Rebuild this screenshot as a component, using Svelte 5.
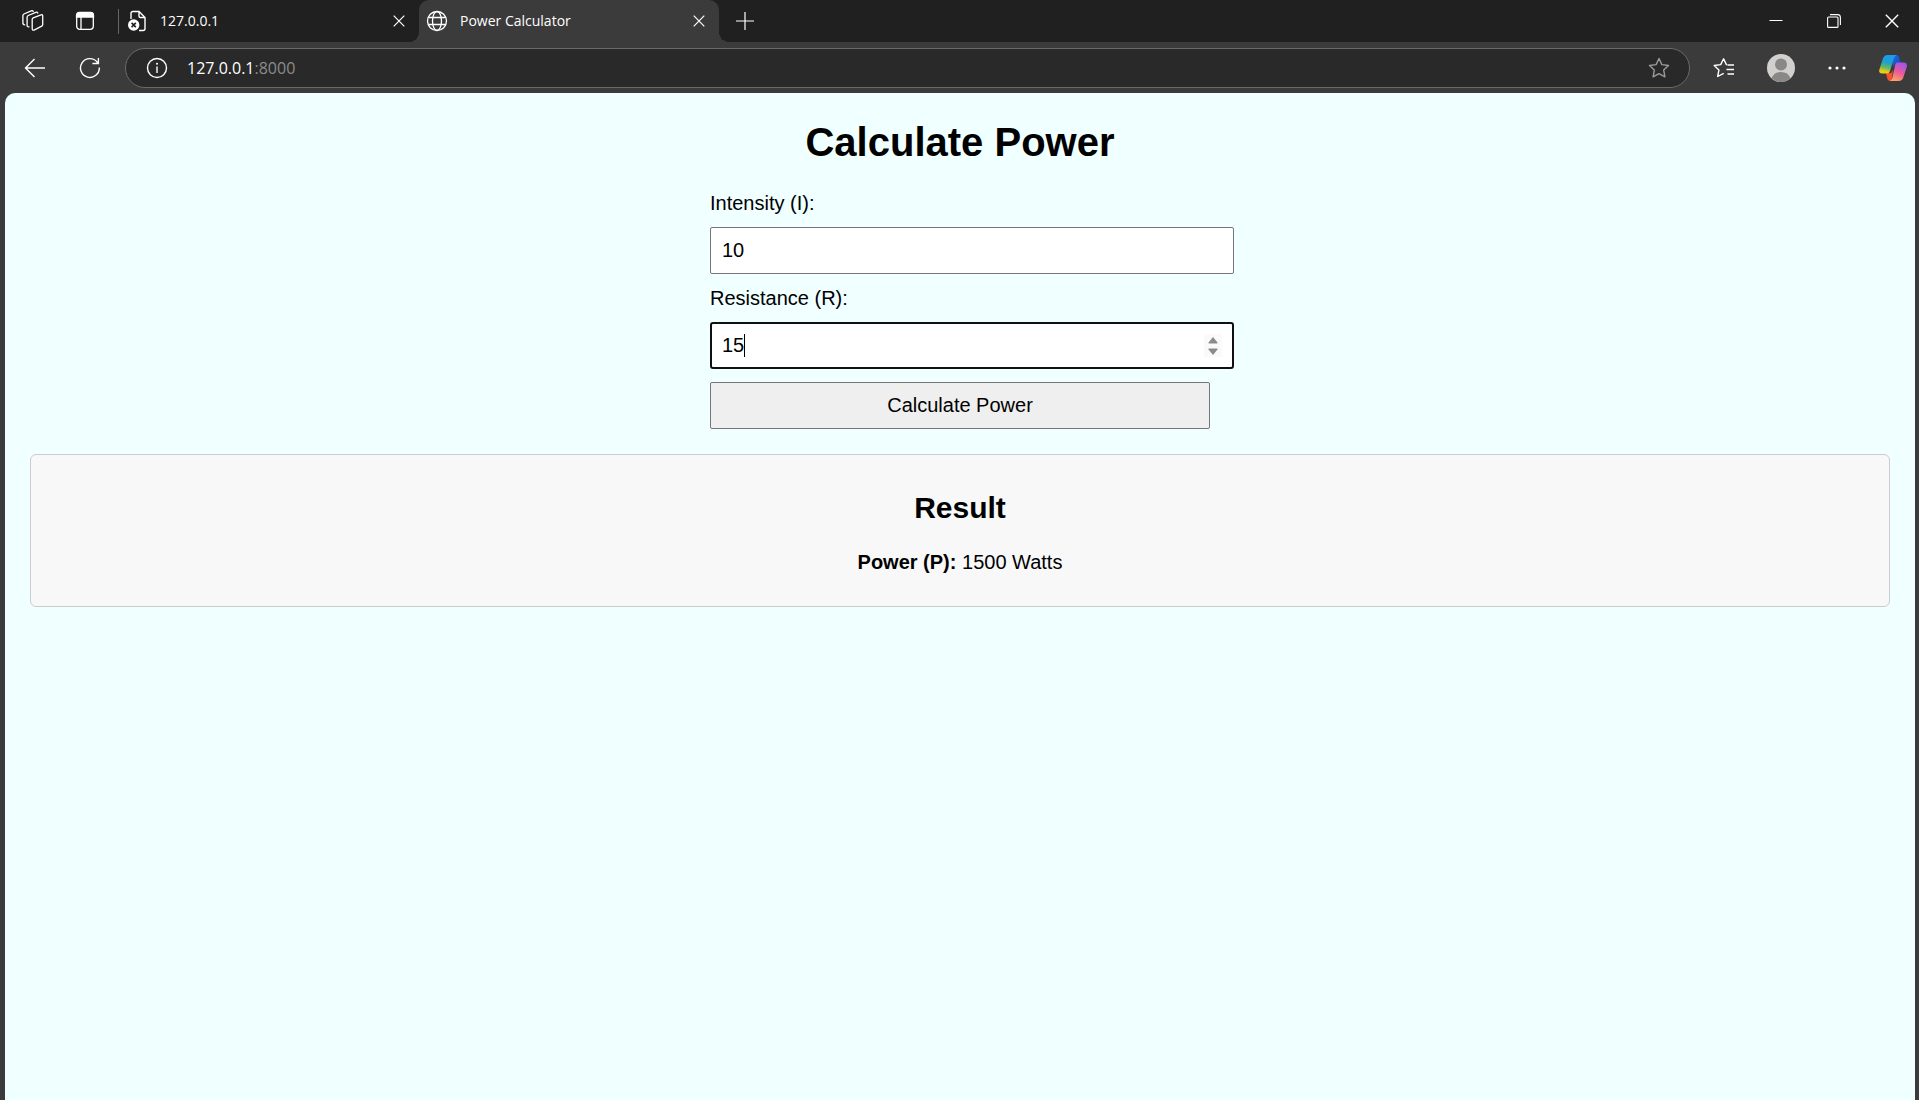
<script>
  let intensity = $state(10);
  let resistance = $state(15);
  let power = $state(1500);

  function calculate(event) {
    event.preventDefault();
    power = intensity * intensity * resistance;
  }
</script>

{#snippet cross(size)}
  <svg width={size} height={size} viewBox="0 0 12 12" fill="none" stroke="currentColor" stroke-width="1.2">
    <path d="M.7.7l10.6 10.6M11.3.7L.7 11.3" />
  </svg>
{/snippet}

<div class="browser">
  <header class="tabs">
    <button class="icon workspaces" aria-label="Workspaces">
      <svg width="22" height="22" viewBox="0 0 22 22" fill="none" stroke="currentColor" stroke-width="1.3" stroke-linejoin="round" stroke-linecap="round">
        <path d="M10.2 9.2q.1-1 1-1.400l7.800-3q1.600-.4 1.700 1.100v8.800q-.1 1-1 1.500l-7.600 3.900q-1.600.5-1.900-1.100z" />
        <path d="M7 16.800q-1.800.2-1.900-1.300V7.200q.1-1.200 1.100-1.700l7.600-3.200q1.500-.4 2 .8" />
        <path d="M2.700 14.800q-1.700 0-1.800-1.400V5.600q0-1.100 1-1.600l7.300-3.100q1.300-.4 2 .3" />
      </svg>
    </button>
    <button class="icon" aria-label="Tab actions">
      <svg width="20" height="20" viewBox="0 0 20 20" fill="none" stroke="currentColor" stroke-width="1.3">
        <rect x="1.700" y="1.700" width="16.600" height="16.600" rx="3" />
        <path d="M1.500 6V4.500q0-3 3-3h11q3 0 3 3V6z" fill="currentColor" />
        <path d="M6 6v12" />
      </svg>
    </button>
    <span class="divider"></span>
    <div class="tab first">
      <svg width="20" height="22" viewBox="0 0 20 22" fill="none" stroke="currentColor" stroke-width="1.4">
        <path d="M4 9V3.500Q4 1.500 6 1.500h6l6 6v11q0 2-2 2h-4M12 1.500V6q0 1.500 1.500 1.500H18" />
        <circle cx="6.700" cy="15" r="5.700" fill="currentColor" stroke="none" />
        <path d="M4.600 12.900l4.200 4.200m0-4.200l-4.200 4.200" stroke="#202020" stroke-width="1.600" />
      </svg>
      <span class="title">127.0.0.1</span>
      <button class="close" aria-label="Close tab">{@render cross(12)}</button>
    </div>
    <div class="tab active">
      <svg width="22" height="22" viewBox="0 0 22 22" fill="none" stroke="currentColor" stroke-width="1.3">
        <circle cx="11" cy="11" r="9.500" />
        <ellipse cx="11" cy="11" rx="4.500" ry="9.500" />
        <path d="M2.500 7.500h17M2.500 14.500h17" />
      </svg>
      <span class="title">Power Calculator</span>
      <button class="close" aria-label="Close tab">{@render cross(12)}</button>
    </div>
    <button class="icon new" aria-label="New tab">
      <svg width="18" height="18" viewBox="0 0 18 18" stroke="currentColor" stroke-width="1.2"><path d="M9 0v18M0 9h18" /></svg>
    </button>
    <div class="window">
      <button class="icon" aria-label="Minimize">
        <svg width="14" height="14" viewBox="0 0 14 14" stroke="currentColor"><path d="M.5 6.500h13" /></svg>
      </button>
      <button class="icon" aria-label="Restore">
        <svg width="14" height="14" viewBox="0 0 14 14" fill="none" stroke="currentColor" stroke-width="1.1">
          <rect x=".6" y="3" width="10.400" height="10.400" rx="1" />
          <path d="M3 .6h7.500q2.900 0 2.900 2.900V11" />
        </svg>
      </button>
      <button class="icon" aria-label="Close">{@render cross(14)}</button>
    </div>
  </header>

  <nav class="toolbar">
    <button class="icon" aria-label="Back">
      <svg width="22" height="20" viewBox="0 0 22 20" fill="none" stroke="currentColor" stroke-width="1.400"><path d="M21 10H1.500M10.500 1l-9 9 9 9" /></svg>
    </button>
    <button class="icon" aria-label="Refresh">
      <svg width="22" height="22" viewBox="0 0 22 22" fill="none" stroke="currentColor" stroke-width="1.400">
        <path d="M20.300 10.500a9.400 9.400 0 1 1-2-5.300l1 1.300M19.400 1v5.500h-6" />
      </svg>
    </button>
    <div class="address">
      <button class="icon" aria-label="Site information">
        <svg width="22" height="22" viewBox="0 0 22 22" fill="none" stroke="currentColor" stroke-width="1.400">
          <circle cx="11" cy="11" r="9.500" /><path d="M11 9.500V16" />
          <circle cx="11" cy="6.800" r="1" fill="currentColor" stroke="none" />
        </svg>
      </button>
      <span class="url">127.0.0.1<span class="port">:8000</span></span>
      <button class="icon star" aria-label="Add to favorites">
        <svg width="22" height="22" viewBox="0 0 22 22" fill="none" stroke="currentColor" stroke-width="1.400" stroke-linejoin="round">
          <path d="M11 1.500l2.900 6.100 6.600.9-4.800 4.600 1.200 6.700-5.900-3.200-5.900 3.200 1.200-6.700L1.500 8.500l6.600-.9z" />
        </svg>
      </button>
    </div>
    <div class="actions">
      <button class="icon" aria-label="Favorites">
        <svg width="22" height="22" viewBox="0 0 22 22" fill="none" stroke="currentColor" stroke-width="1.400" stroke-linejoin="round">
          <path d="M14.500 8H21M13.500 12.500H21M14.500 17H21" />
          <path d="M14.200 7.600h-.8L10.600 1.800 7.700 7.600l-6.500.9 4.700 4.500-1.200 6.500 6-3.100" />
        </svg>
      </button>
      <button class="icon" aria-label="Profile">
        <svg width="28" height="28" viewBox="0 0 28 28">
          <circle cx="14" cy="14" r="14" fill="#d2d0ce" />
          <circle cx="14" cy="10.500" r="6" fill="#8a8886" />
          <path d="M4.500 24.300Q7 18 14 18t9.500 6.300Q19.500 28 14 28t-9.500-3.700z" fill="#8a8886" />
        </svg>
      </button>
      <button class="icon" aria-label="Settings and more">
        <svg width="18" height="4" viewBox="0 0 18 4" fill="currentColor"><circle cx="2" cy="2" r="1.600" /><circle cx="9" cy="2" r="1.600" /><circle cx="16" cy="2" r="1.600" /></svg>
      </button>
      <button class="icon copilot" aria-label="Copilot">
        <svg width="28" height="28" viewBox="0 0 28 28">
          <defs>
            <linearGradient id="cool" x1=".55" y1="0" x2=".35" y2="1">
              <stop offset="0" stop-color="#1a9cf0" /><stop offset=".4" stop-color="#1f9fd0" />
              <stop offset=".68" stop-color="#62b862" /><stop offset=".92" stop-color="#f2cc11" />
            </linearGradient>
            <linearGradient id="warm" x1=".7" y1="0" x2=".3" y2="1">
              <stop offset="0" stop-color="#a054ee" /><stop offset=".5" stop-color="#e85a9c" /><stop offset="1" stop-color="#ffa45c" />
            </linearGradient>
            <linearGradient id="blue" x1="0" y1="0" x2="1" y2="1">
              <stop offset="0" stop-color="#1b6fe0" /><stop offset="1" stop-color="#1742b8" />
            </linearGradient>
          </defs>
          <path d="M13 1h4q2.500 0 3.300 2.500L21.700 9H18q-2 0-2.700 2L14 13z" fill="url(#blue)" />
          <path d="M7 19h5l2-3-1.500 11h-2Q9 27 8.200 24.300z" fill="#f5522d" />
          <path d="M8.500 1h9.500q-2.200.3-3 3l-4 13q-.8 2.500-3.300 2.500H3Q-.6 19.500.4 15.500L3.800 4.800Q5.200 1 8.500 1z" fill="url(#cool)" />
          <path d="M18.500 8.500h6q4 0 3.300 4.200l-3.400 10.500Q23.200 27 19.800 27h-9.300q2.200-.3 2.800-3l3-13.500q.5-2 2.200-2z" fill="url(#warm)" />
        </svg>
      </button>
    </div>
  </nav>

  <main>
    <h1>Calculate Power</h1>
    <form onsubmit={calculate}>
      <label for="intensity">Intensity (I):</label>
      <input id="intensity" type="number" bind:value={intensity} />
      <label for="resistance">Resistance (R):</label>
      <div class="field">
        <input id="resistance" class="current" type="number" bind:value={resistance} />
        <span class="caret"></span>
        <span class="stepper">
          <button type="button" aria-label="Increase" onclick={() => resistance++}>
            <svg width="10" height="7" viewBox="0 0 10 7"><path d="M5 0l4.500 5.500q.3 1-.7 1H1.200q-1 0-.7-1z" fill="#8b8b8b" /></svg>
          </button>
          <button type="button" aria-label="Decrease" onclick={() => resistance--}>
            <svg width="10" height="7" viewBox="0 0 10 7"><path d="M5 7L.5 1.500q-.3-1 .7-1h7.600q1 0 .7 1z" fill="#8b8b8b" /></svg>
          </button>
        </span>
      </div>
      <button class="submit" type="submit">Calculate Power</button>
    </form>
    <section class="result">
      <h2>Result</h2>
      <p><strong>Power (P):</strong> {power} Watts</p>
    </section>
  </main>
</div>

<style>
  :global(body) {
    margin: 0;
    background: #3b3b3b;
  }
  .browser {
    min-height: 100vh;
    display: flex;
    flex-direction: column;
    background: #3b3b3b;
    color: #fff;
    font-family: "Segoe UI", "Open Sans", sans-serif;
  }
  svg {
    display: block;
    flex: none;
  }
  button {
    font: inherit;
    color: inherit;
    padding: 0;
    border: 0;
    background: none;
  }
  .icon {
    width: 30px;
    height: 30px;
    flex: none;
    display: flex;
    align-items: center;
    justify-content: center;
  }
  .copilot {
    width: 28px;
  }
  .tabs {
    height: 42px;
    display: flex;
    align-items: center;
    background: #202020;
    font-size: 14px;
  }
  .workspaces {
    margin: 0 22px 0 18px;
  }
  .divider {
    width: 1px;
    height: 25px;
    margin-left: 18px;
    background: #666;
  }
  .tab {
    width: 300px;
    height: 42px;
    box-sizing: border-box;
    display: flex;
    align-items: center;
    padding: 0 14px 0 7px;
    gap: 12px;
  }
  .first {
    padding-left: 8px;
    gap: 13px;
  }
  .title {
    flex: 1;
    line-height: 20px;
  }
  .active {
    position: relative;
    background: #3b3b3b;
    border-radius: 10px 10px 0 0;
  }
  .active::before,
  .active::after {
    content: "";
    position: absolute;
    bottom: 0;
    width: 10px;
    height: 10px;
  }
  .active::before {
    right: 100%;
    background: radial-gradient(circle at 0 0, #202020 10px, #3b3b3b 10px);
  }
  .active::after {
    left: 100%;
    background: radial-gradient(circle at 100% 0, #202020 10px, #3b3b3b 10px);
  }
  .new {
    margin-left: 11px;
  }
  .window {
    margin-left: auto;
    padding-right: 12px;
    display: flex;
    gap: 28px;
  }
  .toolbar {
    height: 51px;
    box-sizing: border-box;
    display: flex;
    align-items: center;
    padding: 0 12px 0 20px;
  }
  .toolbar > .icon + .icon {
    margin-left: 25px;
  }
  .address {
    flex: 1;
    height: 40px;
    box-sizing: border-box;
    display: flex;
    align-items: center;
    margin: 0 19px 0 20px;
    padding: 0 15px 0 16px;
    border: 1px solid #6a6a6a;
    border-radius: 20px;
    background: #292929;
    font-size: 16px;
  }
  .url {
    flex: 1;
    margin-left: 15px;
    line-height: 24px;
  }
  .port {
    color: #8c8c8c;
  }
  .star {
    color: #9a9a9a;
  }
  .actions {
    flex: none;
    width: 198px;
    display: flex;
    align-items: center;
    justify-content: space-between;
  }
  main {
    flex: 1;
    margin: 0 4px 0 5px;
    padding: 26px 25px 25px;
    border-radius: 10px 10px 0 0;
    background: #f0ffff;
    color: #000;
    font: 20px/23px Arial, "Liberation Sans", sans-serif;
  }
  h1 {
    margin: 0 0 27px;
    font-size: 40px;
    line-height: 46px;
    text-align: center;
  }
  form {
    width: 500px;
    margin: 0 auto;
  }
  label {
    display: block;
    margin-bottom: 12px;
  }
  input {
    display: block;
    box-sizing: content-box;
    width: 100%;
    height: 23px;
    margin: 0 0 13px;
    padding: 11px;
    border: 1px solid #767676;
    border-radius: 2px;
    background: #fff;
    color: #000;
    font: inherit;
    appearance: textfield;
  }
  input::-webkit-inner-spin-button {
    appearance: none;
    margin: 0;
  }
  .current {
    padding: 10px;
    border: 2px solid #101010;
    border-radius: 3px;
    outline: none;
    caret-color: transparent;
  }
  .field {
    position: relative;
  }
  .caret {
    position: absolute;
    left: 34px;
    top: 12px;
    width: 1px;
    height: 23px;
    background: #000;
  }
  .stepper {
    position: absolute;
    left: calc(100% - 6px);
    top: 12px;
    width: 18px;
    height: 23px;
    display: flex;
    flex-direction: column;
    align-items: center;
    justify-content: center;
    gap: 4px;
    background: #fafafa;
  }
  .submit {
    display: block;
    width: 100%;
    height: 47px;
    border: 1px solid #767676;
    border-radius: 2px;
    background: #efefef;
  }
  .result {
    margin-top: 25px;
    padding: 36px 25px 32px;
    border: 1px solid #ccc;
    border-radius: 6px;
    background: #f8f8f8;
    text-align: center;
  }
  h2 {
    margin: 0 0 26px;
    font-size: 30px;
    line-height: 34px;
  }
  p {
    margin: 0;
  }
</style>
